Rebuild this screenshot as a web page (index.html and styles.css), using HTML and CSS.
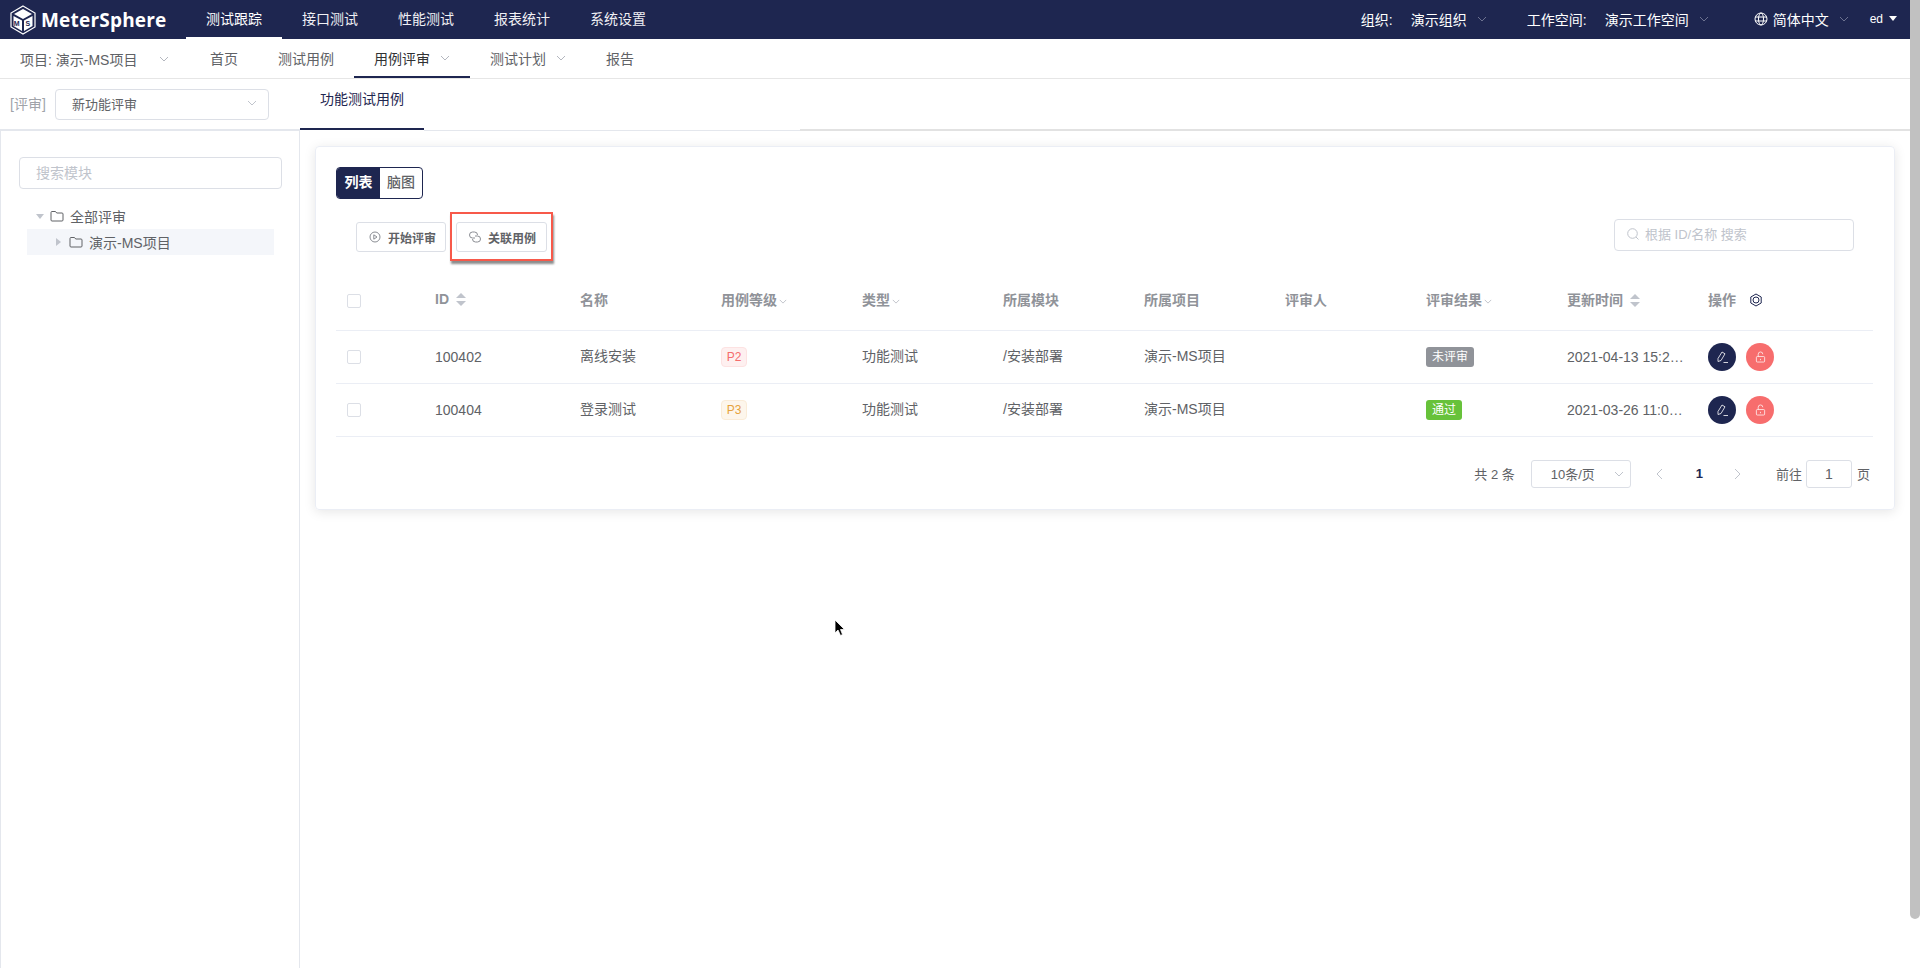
FILE: index.html
```html
<!DOCTYPE html>
<html lang="zh-CN">

<head>
    <meta charset="UTF-8" />
    <title>MeterSphere</title>
    <link rel="stylesheet" href="styles.css">
</head>

<body>
    <header class="top-bar">
        <div class="logo">
            <svg width="28" height="30" viewBox="0 0 28 30">
                <path d="M14 1 L26 8 V22 L14 29 L2 22 V8 Z" fill="none" stroke="#fff" stroke-width="1.2" />
                <path d="M14 4 L23 9 L14 14 L5 9 Z" fill="#fff" />
                <path d="M4.5 11 L13 15.5 V26 L4.5 21 Z" fill="#fff" />
                <path d="M15 15.5 L23.5 11 V21 L15 26 Z" fill="#fff" />
                <text x="4.8" y="21" class="logo-ms">M</text>
                <text x="16.5" y="21" class="logo-ms">S</text>
            </svg>
            <span class="logo-text">MeterSphere</span>
        </div>
        <nav class="main-nav">
            <a class="main-tab active">测试跟踪</a>
            <a class="main-tab">接口测试</a>
            <a class="main-tab">性能测试</a>
            <a class="main-tab">报表统计</a>
            <a class="main-tab">系统设置</a>
        </nav>
        <div class="top-right">
            <span class="top-label">组织:</span>
            <span class="top-value org">演示组织<svg class="chev dim" viewBox="0 0 10 6"><path d="M1 1l4 4 4-4" /></svg></span>
            <span class="top-label">工作空间:</span>
            <span class="top-value space">演示工作空间<svg class="chev dim" viewBox="0 0 10 6"><path d="M1 1l4 4 4-4" /></svg></span>
            <span class="top-value lang">
                <svg width="14" height="14" viewBox="0 0 14 14" class="globe">
                    <circle cx="7" cy="7" r="6" />
                    <ellipse cx="7" cy="7" rx="2.5" ry="6" />
                    <path d="M1 5h12M1 9h12" />
                </svg>简体中文<svg class="chev dim" viewBox="0 0 10 6"><path d="M1 1l4 4 4-4" /></svg></span>
            <span class="user">ed<i class="caret"></i></span>
        </div>
    </header>

    <nav class="sub-nav">
        <a class="project">项目: 演示-MS项目<svg class="chev gray" viewBox="0 0 10 6"><path d="M1 1l4 4 4-4" /></svg></a>
        <a class="sub-tab home">首页</a>
        <a class="sub-tab">测试用例</a>
        <a class="sub-tab active">用例评审<svg class="chev gray" viewBox="0 0 10 6"><path d="M1 1l4 4 4-4" /></svg></a>
        <a class="sub-tab">测试计划<svg class="chev gray" viewBox="0 0 10 6"><path d="M1 1l4 4 4-4" /></svg></a>
        <a class="sub-tab">报告</a>
    </nav>

    <div class="review-bar">
        <div class="review-pick">
            <span class="review-tag">[评审]</span>
            <div class="review-select">新功能评审<svg class="chev light" viewBox="0 0 10 6"><path d="M1 1l4 4 4-4" /></svg></div>
        </div>
        <div class="case-tab">功能测试用例</div>
        <div class="tab-fill"></div>
        <div class="tab-fill wide"></div>
    </div>

    <div class="workspace">
        <aside class="side">
            <div class="module-search">搜索模块</div>
            <div class="tree-row first">
                <i class="tree-arrow open"></i>
                <svg class="folder" viewBox="0 0 14 12"><path d="M1 2.5a1 1 0 0 1 1-1h3.5l1.2 1.5H12a1 1 0 0 1 1 1V10a1 1 0 0 1-1 1H2a1 1 0 0 1-1-1z" /></svg>
                全部评审
            </div>
            <div class="tree-row child">
                <i class="tree-arrow"></i>
                <svg class="folder" viewBox="0 0 14 12"><path d="M1 2.5a1 1 0 0 1 1-1h3.5l1.2 1.5H12a1 1 0 0 1 1 1V10a1 1 0 0 1-1 1H2a1 1 0 0 1-1-1z" /></svg>
                演示-MS项目
            </div>
        </aside>

        <main class="content">
            <section class="card">
                <div class="view-toggle">
                    <span class="view-btn on">列表</span>
                    <span class="view-btn">脑图</span>
                </div>

                <div class="toolbar">
                    <div class="tool-btns">
                        <button class="tool-btn">
                            <svg width="12" height="12" viewBox="0 0 12 12" class="tool-icon">
                                <circle cx="6" cy="6" r="5" />
                                <path d="M4.8 3.8 L8 6 L4.8 8.2 Z" />
                            </svg>开始评审
                        </button>
                        <button class="tool-btn link">
                            <svg width="12" height="12" viewBox="0 0 12 12" class="tool-icon">
                                <path d="M6 7H3.5a3 3 0 0 1 0-6h2a3 3 0 0 1 3 3" />
                                <path d="M6 5h2.5a3 3 0 0 1 0 6h-2a3 3 0 0 1-3-3" />
                            </svg>关联用例
                            <span class="highlight"></span>
                        </button>
                    </div>
                    <div class="case-search">
                        <svg width="14" height="14" viewBox="0 0 14 14" class="search-icon">
                            <circle cx="6.5" cy="6.5" r="4.8" />
                            <path d="M10 10l2.5 2.5" />
                        </svg>根据 ID/名称 搜索
                    </div>
                </div>

                <table class="case-table">
                    <colgroup>
                        <col class="col-check">
                        <col class="col-id">
                        <col class="col-n">
                        <col class="col-n">
                        <col class="col-n">
                        <col class="col-n">
                        <col class="col-n">
                        <col class="col-n">
                        <col class="col-n">
                        <col class="col-n">
                        <col>
                    </colgroup>
                    <thead>
                        <tr>
                            <th class="mid"><i class="check"></i></th>
                            <th>ID<i class="sort"></i></th>
                            <th>名称</th>
                            <th>用例等级<svg class="chev th-chev" viewBox="0 0 10 6"><path d="M1 1l4 4 4-4" /></svg></th>
                            <th>类型<svg class="chev th-chev" viewBox="0 0 10 6"><path d="M1 1l4 4 4-4" /></svg></th>
                            <th>所属模块</th>
                            <th>所属项目</th>
                            <th>评审人</th>
                            <th>评审结果<svg class="chev th-chev" viewBox="0 0 10 6"><path d="M1 1l4 4 4-4" /></svg></th>
                            <th>更新时间<i class="sort"></i></th>
                            <th>操作
                                <svg class="gear" width="14" height="14" viewBox="0 0 14 14">
                                    <path d="M7 1 L12.2 4 V10 L7 13 L1.8 10 V4 Z" />
                                    <circle cx="7" cy="7" r="3" />
                                </svg>
                            </th>
                        </tr>
                    </thead>
                    <tbody>
                        <tr>
                            <td class="mid"><i class="check"></i></td>
                            <td class="mid">100402</td>
                            <td>离线安装</td>
                            <td class="mid"><span class="level p2">P2</span></td>
                            <td>功能测试</td>
                            <td>/安装部署</td>
                            <td>演示-MS项目</td>
                            <td></td>
                            <td class="mid"><span class="result pending">未评审</span></td>
                            <td class="mid"><div class="time">2021-04-13 15:25:41</div></td>
                            <td class="mid">
                                <div class="ops">
                                    <span class="op-btn edit">
                                        <svg width="14" height="14" viewBox="0 0 14 14"><path d="M3 11.5 V8.5 L7 2 L10 3.8 L6 10.5 Z M8.5 12.5h4.5" /></svg>
                                    </span>
                                    <span class="op-btn lock">
                                        <svg width="11" height="12" viewBox="0 0 12 13"><rect x="1.5" y="6" width="9" height="6" rx="1" /><path d="M3.5 6V3.5a2.5 2.5 0 0 1 5 0M6 8.5v1.5" /></svg>
                                    </span>
                                </div>
                            </td>
                        </tr>
                        <tr>
                            <td class="mid"><i class="check"></i></td>
                            <td class="mid">100404</td>
                            <td>登录测试</td>
                            <td class="mid"><span class="level p3">P3</span></td>
                            <td>功能测试</td>
                            <td>/安装部署</td>
                            <td>演示-MS项目</td>
                            <td></td>
                            <td class="mid"><span class="result passed">通过</span></td>
                            <td class="mid"><div class="time">2021-03-26 11:05:22</div></td>
                            <td class="mid">
                                <div class="ops">
                                    <span class="op-btn edit">
                                        <svg width="14" height="14" viewBox="0 0 14 14"><path d="M3 11.5 V8.5 L7 2 L10 3.8 L6 10.5 Z M8.5 12.5h4.5" /></svg>
                                    </span>
                                    <span class="op-btn lock">
                                        <svg width="11" height="12" viewBox="0 0 12 13"><rect x="1.5" y="6" width="9" height="6" rx="1" /><path d="M3.5 6V3.5a2.5 2.5 0 0 1 5 0M6 8.5v1.5" /></svg>
                                    </span>
                                </div>
                            </td>
                        </tr>
                    </tbody>
                </table>

                <div class="pager">
                    <span class="pager-total">共 2 条</span>
                    <div class="pager-size">10条/页<svg class="chev light" viewBox="0 0 10 6"><path d="M1 1l4 4 4-4" /></svg></div>
                    <svg class="page-arrow" width="7" height="12" viewBox="0 0 7 12"><path d="M6 1L1 6l5 5" /></svg>
                    <span class="page-num">1</span>
                    <svg class="page-arrow" width="7" height="12" viewBox="0 0 7 12"><path d="M1 1l5 5-5 5" /></svg>
                    <span class="goto">前往</span>
                    <div class="goto-box">1</div>
                    <span class="goto-unit">页</span>
                </div>
            </section>
        </main>
    </div>

    <!-- scrollbar thumb and mouse pointer, both sit on top of the page -->
    <div class="scroll-thumb"></div>
    <svg class="pointer" width="12" height="18" viewBox="0 0 12 18">
        <path d="M1 1 L1 14 L4 11 L6.5 16.5 L8.5 15.5 L6.5 10.5 L10.5 10.5 Z" fill="#000" stroke="#fff" stroke-width="0.8" />
    </svg>
</body>

</html>
```
FILE: styles.css
```css
* {
    box-sizing: border-box;
}

html,
body {
    margin: 0;
    padding: 0;
    height: 100%;
    overflow: hidden;
}

body {
    font-family: "Liberation Sans", "Noto Sans CJK SC", sans-serif;
    font-size: 14px;
    color: #606266;
    background: #fff;
}

/* top bar */
.top-bar {
    display: flex;
    align-items: stretch;
    height: 39px;
    background: #1e2650;
    color: #fff;
}

.logo {
    display: flex;
    align-items: center;
    width: 186px;
    padding-left: 9px;
}

.logo-ms {
    font-family: "Liberation Sans", sans-serif;
    font-size: 7px;
    font-weight: 700;
    fill: #1e2650;
}

.logo-text {
    margin-left: 4px;
    font-family: "Open Sans", sans-serif;
    font-size: 19px;
    font-weight: 700;
    letter-spacing: 0.2px;
}

.main-nav {
    display: flex;
}

.main-tab {
    display: flex;
    align-items: center;
    padding: 0 20px 1px;
    border-bottom: 2px solid transparent;
    color: #f0f0f4;
}

.main-tab.active {
    border-bottom-color: #fff;
    color: #fff;
}

.top-right {
    display: flex;
    align-items: center;
    margin-left: auto;
    padding: 0 23px 2px 0;
}

.top-label {
    margin-right: 18px;
}

.top-value {
    display: flex;
    align-items: center;
}

.top-value.org {
    margin-right: 40px;
}

.top-value.space {
    margin-right: 45px;
}

.user {
    display: flex;
    align-items: center;
    margin-left: 21px;
    font-size: 12px;
}

.caret {
    width: 0;
    height: 0;
    margin-left: 6px;
    border: 4px solid transparent;
    border-top: 5px solid #fff;
    border-bottom: 0;
}

.globe {
    margin-right: 5px;
    fill: none;
    stroke: #fff;
}

.chev {
    width: 10px;
    height: 6px;
    fill: none;
    stroke-width: 1;
}

.chev.dim {
    margin-left: 10px;
    stroke: #6c7290;
}

.chev.gray {
    margin-left: 10px;
    stroke: #b4b7bf;
}

.chev.light {
    stroke: #c0c4cc;
}

/* second nav */
.sub-nav {
    display: flex;
    height: 40px;
    border-bottom: 1px solid #e6e6e6;
}

.project {
    display: flex;
    align-items: center;
    width: 190px;
    padding-left: 20px;
}

.project .chev {
    margin-left: 22px;
}

.sub-tab {
    display: flex;
    align-items: center;
    padding: 0 20px;
    border-bottom: 2px solid transparent;
}

.sub-tab.active {
    border-bottom-color: #1e2650;
    color: #303133;
}

/* review bar */
.review-bar {
    display: flex;
    height: 52px;
}

.review-pick {
    display: flex;
    width: 300px;
    padding: 10px 0 0 10px;
    border-bottom: 2px solid #e4e7ed;
}

.review-tag {
    width: 45px;
    padding-top: 4px;
    color: #a0a3a9;
}

.review-select {
    display: flex;
    align-items: center;
    justify-content: space-between;
    width: 214px;
    height: 31px;
    padding: 0 11px 3px 16px;
    border: 1px solid #dcdfe6;
    border-radius: 4px;
    font-size: 13px;
}

.case-tab {
    width: 124px;
    height: 51px;
    padding-top: 9px;
    border-bottom: 2px solid #1e2650;
    color: #1e2650;
    text-align: center;
}

.tab-fill {
    width: 376px;
    border-bottom: 1px solid #e4e7ed;
}

.tab-fill.wide {
    flex: 1;
    border-bottom-width: 2px;
    border-bottom-color: #e2e2e2;
}

/* left tree and content */
.workspace {
    display: flex;
    height: 837px;
}

.side {
    width: 300px;
    padding: 26px 0 0 18px;
    border-left: 1px solid #e4e7ed;
    border-right: 1px solid #e4e7ed;
}

.module-search {
    width: 263px;
    height: 32px;
    padding: 4px 15px 0 16px;
    border: 1px solid #dcdfe6;
    border-radius: 4px;
    color: #c0c4cc;
}

.tree-row {
    display: flex;
    align-items: center;
    width: 247px;
    height: 26px;
    margin-left: 8px;
    gap: 5px;
}

.tree-row.first {
    margin-top: 14px;
    padding-left: 9px;
}

.tree-row.child {
    padding-left: 29px;
    background: #f4f6fa;
}

.tree-arrow {
    width: 0;
    height: 0;
    margin-right: 2px;
    border-left: 5px solid #c0c4cc;
    border-top: 4px solid transparent;
    border-bottom: 4px solid transparent;
}

.tree-arrow.open {
    margin-right: 0;
    border-top: 5px solid #c0c4cc;
    border-left: 4px solid transparent;
    border-right: 4px solid transparent;
    border-bottom: 0;
}

.folder {
    width: 14px;
    height: 12px;
    margin: 0 1px;
    fill: none;
    stroke: #606266;
}

.content {
    flex: 1;
    padding: 15px 25px 0 15px;
}

/* card */
.card {
    height: 364px;
    padding: 20px 19px 0 20px;
    border: 1px solid #ebeef5;
    border-radius: 4px;
    box-shadow: 0 2px 12px 0 rgba(0, 0, 0, 0.1);
}

.view-toggle {
    display: flex;
    width: 87px;
    height: 32px;
    border: 1px solid #1e2650;
    border-radius: 4px;
    overflow: hidden;
}

.view-btn {
    flex: 1;
    text-align: center;
    line-height: 28px;
    font-weight: 500;
    color: #606266;
}

.view-btn.on {
    background: #1e2650;
    color: #fff;
    font-weight: 700;
    flex: 0 0 43px;
}

.toolbar {
    display: flex;
    justify-content: space-between;
    margin-top: 20px;
    padding: 0 21px 0 20px;
}

.tool-btns {
    display: flex;
    gap: 10px;
    margin-top: 3px;
}

.tool-btn {
    position: relative;
    display: flex;
    align-items: center;
    height: 30px;
    width: 90px;
    padding: 0 0 0 12px;
    border: 1px solid #dcdfe6;
    border-radius: 3px;
    background: #fff;
    color: #606266;
    font-family: inherit;
    font-size: 12px;
    font-weight: 700;
}

.tool-btn.link {
    width: 91px;
}

.tool-icon {
    margin-right: 7px;
    fill: none;
    stroke: #8a8d93;
}

.highlight {
    position: absolute;
    left: -7px;
    top: -11px;
    width: 103px;
    height: 49px;
    border: 2px solid #f7594a;
    box-shadow: 1px 3px 2px rgba(0, 0, 0, 0.45);
}

.case-search {
    display: flex;
    align-items: center;
    width: 240px;
    height: 32px;
    padding: 0 0 3px 11px;
    border: 1px solid #dcdfe6;
    border-radius: 4px;
    color: #c0c4cc;
    font-size: 13px;
}

.search-icon {
    margin-right: 5px;
    fill: none;
    stroke: #c0c4cc;
}

/* table */
.case-table {
    width: 1537px;
    margin-top: 20px;
    border-collapse: collapse;
    table-layout: fixed;
}

.col-check {
    width: 89px;
}

.col-id {
    width: 145px;
}

.col-n {
    width: 141px;
}

.case-table th,
.case-table td {
    padding: 0 10px 3px;
    border-bottom: 1px solid #ebeef5;
    text-align: left;
}

.case-table th {
    height: 58px;
    color: #909399;
    font-weight: 700;
}

.case-table td {
    height: 53px;
}

.case-table th.mid,
.case-table td.mid {
    padding-bottom: 0;
}

.case-table th:first-child,
.case-table td:first-child {
    padding-left: 11px;
}

.check {
    display: block;
    width: 14px;
    height: 14px;
    border: 1px solid #dcdfe6;
    border-radius: 2px;
}

.sort {
    display: inline-block;
    position: relative;
    width: 10px;
    height: 13px;
    margin-left: 7px;
    vertical-align: -2px;
}

.sort::before,
.sort::after {
    content: "";
    position: absolute;
    left: 0;
    border-left: 5px solid transparent;
    border-right: 5px solid transparent;
}

.sort::before {
    top: 0;
    border-bottom: 5px solid #c0c4cc;
}

.sort::after {
    bottom: 0;
    border-top: 5px solid #c0c4cc;
}

.th-chev {
    width: 8px;
    height: 5px;
    margin-left: 2px;
    stroke: #b4b7bf;
    vertical-align: 1px;
}

.gear {
    margin-left: 9px;
    vertical-align: -2px;
    fill: none;
    stroke: #1e2650;
    stroke-linejoin: round;
}

.level {
    display: inline-block;
    width: 26px;
    height: 20px;
    border: 1px solid;
    border-radius: 4px;
    font-size: 12px;
    line-height: 18px;
    text-align: center;
}

.level.p2 {
    background: #fef0f0;
    border-color: #fde2e2;
    color: #f56c6c;
}

.level.p3 {
    background: #fdf6ec;
    border-color: #faecd8;
    color: #e6a23c;
}

.result {
    display: inline-block;
    height: 20px;
    padding: 0 6px;
    border-radius: 3px;
    color: #fff;
    font-size: 12px;
    line-height: 20px;
}

.result.pending {
    background: #909399;
}

.result.passed {
    background: #67c23a;
}

.time {
    overflow: hidden;
    white-space: nowrap;
    text-overflow: ellipsis;
}

.ops {
    display: flex;
    gap: 10px;
}

.op-btn {
    display: flex;
    align-items: center;
    justify-content: center;
    width: 28px;
    height: 28px;
    border-radius: 50%;
}

.op-btn svg {
    fill: none;
    stroke: rgba(255, 255, 255, 0.8);
}

.op-btn.edit {
    background: #1e2650;
}

.op-btn.lock {
    background: #f76d6d;
}

/* pager */
.pager {
    display: flex;
    align-items: center;
    justify-content: flex-end;
    margin-top: 23px;
    padding-right: 5px;
    font-size: 13px;
}

.pager-total {
    margin-right: 16px;
}

.pager-size {
    display: flex;
    align-items: center;
    justify-content: space-between;
    width: 100px;
    height: 28px;
    padding: 0 6px 0 19px;
    border: 1px solid #dcdfe6;
    border-radius: 3px;
}

.page-arrow {
    margin-left: 25px;
    fill: none;
    stroke: #c0c4cc;
}

.page-num {
    margin-left: 33px;
    margin-right: 6px;
    color: #1e2650;
    font-weight: 700;
}

.goto {
    margin-left: 35px;
}

.goto-box {
    width: 46px;
    height: 28px;
    margin: 0 5px 0 4px;
    border: 1px solid #dcdfe6;
    border-radius: 3px;
    font-size: 14px;
    line-height: 26px;
    text-align: center;
}

/* overlays */
.scroll-thumb {
    position: absolute;
    top: 0;
    right: 0;
    width: 10px;
    height: 919px;
    border-radius: 0 0 5px 5px;
    background: #c1c1c1;
}

.pointer {
    position: absolute;
    left: 834px;
    top: 619px;
}
```
